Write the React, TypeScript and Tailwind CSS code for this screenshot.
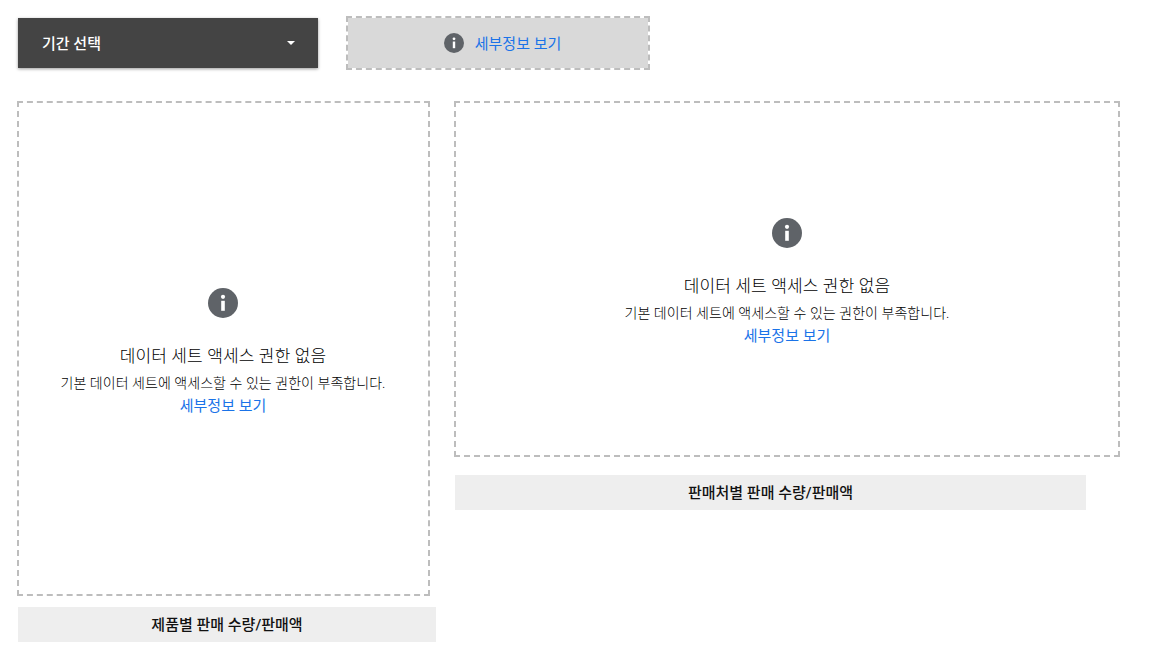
import React from 'react';

const font = "font-['Roboto','Noto_Sans_CJK_KR',sans-serif]";

const InfoIcon = ({ size }: { size: number }) => (
    <svg width={size} height={size} viewBox="0 0 30 30" className="shrink-0 block">
        <circle cx="15" cy="15" r="15" fill="#5f6368" />
        <circle cx="15" cy="8.8" r="2.1" fill="#fff" />
        <rect x="13.2" y="12.8" width="3.6" height="10" fill="#fff" />
    </svg>
);

const NoAccess = () => (
    <div className="flex flex-col items-center">
        <InfoIcon size={30} />
        <div className="mt-[26px] text-[17px] leading-[24px] font-light tracking-[0.15px] text-black">데이터 세트 액세스 권한 없음</div>
        <div className="mt-[5px] text-[14px] leading-[20px] font-light tracking-[0.05px] text-black">기본 데이터 세트에 액세스할 수 있는 권한이 부족합니다.</div>
        <a className="mt-[2px] text-[15px] leading-[22px] text-[#1a73e8]">세부정보 보기</a>
    </div>
);

const Caption = ({ title, width }: { title: string; width: string }) => (
    <div className={`${width} ml-px h-[35px] pt-px bg-[#eeeeee] flex items-center justify-center text-[15px] font-medium text-[#111]`}>
        {title}
    </div>
);

export default function App() {
    return (
        <div className={`${font} w-[1149px] h-[664px] bg-white overflow-hidden pl-[17px] pt-[16px]`}>
            {/* Top controls */}
            <div className="flex items-center h-[54px]">
                <div className="ml-px w-[300px] h-[50px] bg-[#444444] shadow-[0_1px_3px_rgba(0,0,0,0.4)] flex items-center justify-between pl-[24px] pr-[23px] text-white text-[15px] font-medium">
                    <span className="translate-y-px">기간 선택</span>
                    <span className="w-0 h-0 border-x-[4px] border-x-transparent border-t-[4px] border-t-white" />
                </div>
                <div className="ml-[28px] w-[304px] h-[54px] bg-[#d9d9d9] bg-clip-padding border-2 border-dashed border-[#bdbdbd] flex items-center justify-center gap-[11px] pl-[9px]">
                    <InfoIcon size={20} />
                    <a className="text-[15px] text-[#1a73e8] translate-y-px">세부정보 보기</a>
                </div>
            </div>

            {/* Charts */}
            <div className="flex items-start mt-[31px]">
                <div className="w-[419px] flex flex-col">
                    <div className="w-[413px] h-[495px] pt-[8px] pr-px border-2 border-dashed border-[#bdbdbd] flex items-center justify-center">
                        <NoAccess />
                    </div>
                    <div className="mt-[11px]">
                        <Caption title="제품별 판매 수량/판매액" width="w-[418px]" />
                    </div>
                </div>
                <div className="ml-[18px] flex flex-col">
                    <div className="w-[666px] h-[356px] pt-[6px] border-2 border-dashed border-[#bdbdbd] flex items-center justify-center">
                        <NoAccess />
                    </div>
                    <div className="mt-[18px]">
                        <Caption title="판매처별 판매 수량/판매액" width="w-[631px]" />
                    </div>
                </div>
            </div>
        </div>
    );
}
